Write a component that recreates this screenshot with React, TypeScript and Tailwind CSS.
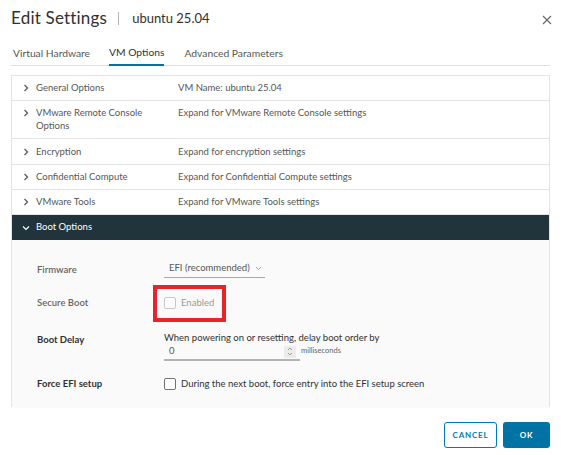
import React from "react";

function Chevron({ open = false, light = false }: { open?: boolean; light?: boolean }) {
  return (
    <svg
      width="8"
      height="8"
      viewBox="0 0 8 8"
      className="shrink-0"
      fill="none"
      stroke={light ? "#ffffff" : "#565656"}
      strokeWidth="1.2"
    >
      {open ? <path d="M1 2.5 L4 5.5 L7 2.5" /> : <path d="M2.5 1 L5.5 4 L2.5 7" />}
    </svg>
  );
}

function Checkbox({ disabled = false }: { disabled?: boolean }) {
  return (
    <span
      className={
        "inline-block w-[12px] h-[12px] rounded-[2px] border bg-white shrink-0 " +
        (disabled ? "border-[#c8c8c8]" : "border-[#737373]")
      }
    />
  );
}

const rows: Array<{ label: string[]; desc: string; h: string }> = [
  { label: ["General Options"], desc: "VM Name: ubuntu 25.04", h: "h-[25px] pt-[6px]" },
  {
    label: ["VMware Remote Console", "Options"],
    desc: "Expand for VMware Remote Console settings",
    h: "h-[38px] pt-[6px]",
  },
  { label: ["Encryption"], desc: "Expand for encryption settings", h: "h-[26px] pt-[7px]" },
  { label: ["Confidential Compute"], desc: "Expand for Confidential Compute settings", h: "h-[25px] pt-[6px]" },
  { label: ["VMware Tools"], desc: "Expand for VMware Tools settings", h: "h-[25px] pt-[6px]" },
];

export default function App() {
  return (
    <div className="w-[561px] h-[455px] bg-white font-['Lato','Open_Sans',sans-serif] text-[#565656] overflow-hidden">
      {/* header */}
      <div className="flex items-center h-[20px] mt-[8px] pl-[11px] pr-[9px]">
        <span className="text-[17px] leading-[20px] text-[#313131] tracking-[0.2px]">Edit Settings</span>
        <span className="w-px h-[13px] bg-[#b3b3b3] ml-[11px] mr-[13px]" />
        <span className="text-[13px] leading-[20px] text-[#313131]">ubuntu 25.04</span>
        <svg width="10" height="10" viewBox="0 0 10 10" className="ml-auto mt-[3px]" stroke="#666" strokeWidth="1.1">
          <path d="M1 1 L9 9 M9 1 L1 9" />
        </svg>
      </div>

      {/* tabs */}
      <div className="mx-[11px] mt-[14px] flex border-b border-[#e0e0e0] h-[24px] text-[10.3px] text-[#565656]">
        <div className="pl-[2px] pr-[10px] flex items-center">Virtual Hardware</div>
        <div className="mx-[9px] flex items-center border-b-2 border-[#0072a3] -mb-px text-[#313131]">VM Options</div>
        <div className="ml-[11px] flex items-center">Advanced Parameters</div>
      </div>

      {/* stack view */}
      <div className="mx-[11px] mt-[9px] border-x border-t border-[#e4e4e4] h-[332px] text-[9.5px]">
        {rows.map((r) => (
          <div key={r.desc} className={"flex items-start border-b border-[#e4e4e4] bg-white leading-[12px] " + r.h}>
            <div className="w-[166px] flex items-start shrink-0">
              <span className="ml-[10px] mr-[6px] mt-[2px]">
                <Chevron />
              </span>
              <div className="flex flex-col gap-[1px]">
                {r.label.map((l) => (
                  <span key={l}>{l}</span>
                ))}
              </div>
            </div>
            <span>{r.desc}</span>
          </div>
        ))}
        <div className="flex items-center h-[25px] bg-[#21333b] text-white">
          <span className="ml-[10px] mr-[6px] flex">
            <Chevron open light />
          </span>
          <span>Boot Options</span>
        </div>

        <div className="bg-[#fafafa] h-[168px] pt-[20px] pl-[25px]">
          {/* Firmware */}
          <div className="flex items-center h-[20px]">
            <span className="w-[127px] font-semibold text-[#666]">Firmware</span>
            <div className="w-[101px] h-[18px] border-b border-[#a8a8a8] flex items-center pl-[5px] mt-[-2px] text-[#565656] whitespace-nowrap">
              EFI (recommended)
              <svg width="7" height="5" viewBox="0 0 7 5" className="ml-[5px]" fill="none" stroke="#999" strokeWidth="0.9">
                <path d="M1 1 L3.5 3.5 L6 1" />
              </svg>
            </div>
          </div>

          {/* Secure boot */}
          <div className="flex items-center h-[20px] mt-[13px]">
            <span className="w-[127px] font-semibold text-[#666]">Secure Boot</span>
            <div className="relative flex items-center gap-[5px] text-[#999]">
              <Checkbox disabled />
              <span>Enabled</span>
              <div className="absolute left-[-11px] top-[-11px] w-[73px] h-[37px] border-[4px] border-[#e8232b]" />
            </div>
          </div>

          {/* Boot delay */}
          <div className="flex items-start mt-[18px]">
            <span className="w-[127px] pt-[2px] leading-[13px] font-bold text-[#313131]">Boot Delay</span>
            <div className="flex flex-col">
              <span className="leading-[13px] text-[#313131]">When powering on or resetting, delay boot order by</span>
              <div className="flex items-center">
                <div className="w-[136px] h-[17px] border-b-2 border-[#b3b3b3] flex items-center pl-[5px] text-[#565656]">
                  <span>0</span>
                  <span className="ml-auto mr-[4px] w-[12px] h-[12px] bg-[#ececec] flex items-center justify-center">
                    <svg width="6" height="9" viewBox="0 0 6 9" fill="none" stroke="#8c8c8c" strokeWidth="0.8">
                      <path d="M1 3 L3 1 L5 3 M1 6 L3 8 L5 6" />
                    </svg>
                  </span>
                </div>
                <span className="ml-[1px] mt-[-4px] text-[7.5px] text-[#666]">milliseconds</span>
              </div>
            </div>
          </div>

          {/* Force EFI */}
          <div className="flex items-center h-[20px] mt-[13px]">
            <span className="w-[127px] font-bold text-[#313131]">Force EFI setup</span>
            <div className="flex items-center gap-[5px] text-[#313131]">
              <Checkbox />
              <span>During the next boot, force entry into the EFI setup screen</span>
            </div>
          </div>
        </div>
      </div>

      {/* footer */}
      <div className="flex justify-end gap-[6px] mr-[11px] mt-[15px]">
        <button
          type="button"
          className="w-[53px] h-[26px] rounded-[3px] border border-[#0079b8] bg-white text-[#0079b8] text-[8px] font-bold tracking-[0.8px]"
        >
          CANCEL
        </button>
        <button
          type="button"
          className="w-[47px] h-[26px] rounded-[3px] bg-[#0072a3] text-white text-[8px] font-bold tracking-[0.8px]"
        >
          OK
        </button>
      </div>
    </div>
  );
}
